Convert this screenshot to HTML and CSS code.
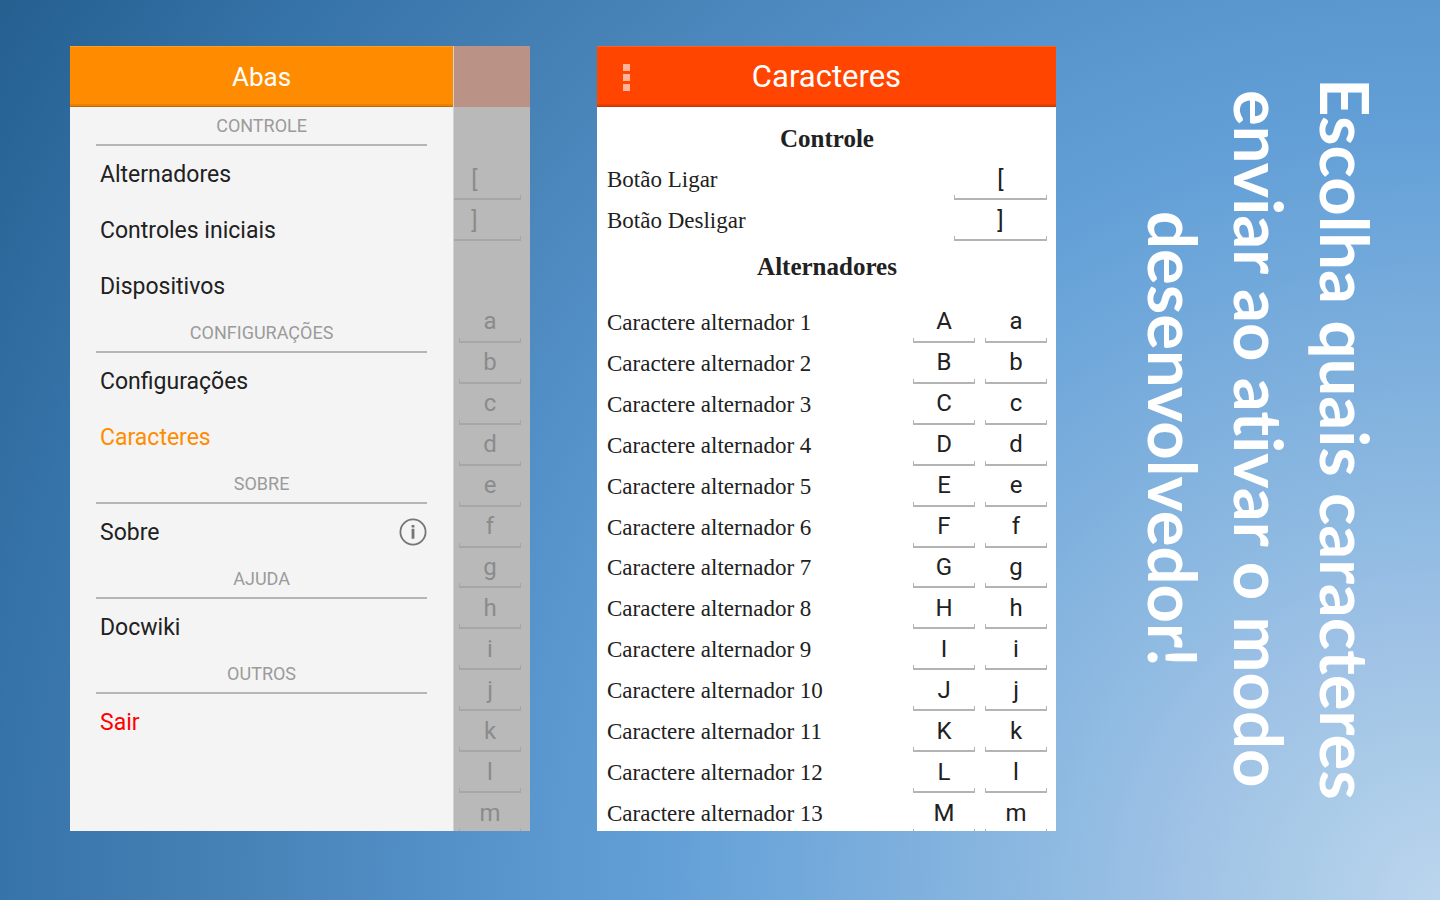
FILE: index.html
```html
<!DOCTYPE html>
<html lang="pt-BR">
<head>
<meta charset="utf-8">
<title>Caracteres</title>
<link rel="stylesheet" href="styles.css">
</head>
<body>
<main class="stage">
  <section class="phone phone-menu">
    <div class="drawer">
      <header class="bar bar-orange"><h2 class="bar-title bar-title-small">Abas</h2></header>
      <nav class="menu">
        <h3 class="menu-head">CONTROLE</h3>
        <a class="menu-item" href="#">Alternadores</a>
        <a class="menu-item" href="#">Controles iniciais</a>
        <a class="menu-item" href="#">Dispositivos</a>
        <h3 class="menu-head">CONFIGURAÇÕES</h3>
        <a class="menu-item" href="#">Configurações</a>
        <a class="menu-item current" href="#">Caracteres</a>
        <h3 class="menu-head">SOBRE</h3>
        <a class="menu-item" href="#">Sobre
          <svg class="info" viewBox="0 0 28 28" aria-hidden="true"><circle cx="14" cy="14" r="12.6" fill="none" stroke="#757575" stroke-width="1.8"/><path d="M12.6 7h2.8v2.4h-2.8zM12.6 10.8h2.8v10h-2.8z" fill="#757575"/></svg>
        </a>
        <h3 class="menu-head">AJUDA</h3>
        <a class="menu-item" href="#">Docwiki</a>
        <h3 class="menu-head">OUTROS</h3>
        <a class="menu-item danger" href="#">Sair</a>
      </nav>
    </div>
    <div class="behind">
      <div class="behind-bar"></div>
      <div class="behind-list">
        <div class="row"><input class="field wide" value="[" disabled aria-label="Botão Ligar"></div>
        <div class="row"><input class="field wide" value="]" disabled aria-label="Botão Desligar"></div>
        <div class="group-tall"></div>
        <div class="rows" id="behind"></div>
      </div>
    </div>
  </section>

  <section class="phone phone-page">
    <header class="bar bar-red">
      <button class="more" type="button" aria-label="Menu"><span class="dot"></span><span class="dot"></span><span class="dot"></span></button>
      <h1 class="bar-title">Caracteres</h1>
    </header>
    <form class="form">
      <h2 class="group">Controle</h2>
      <div class="row"><label class="label" for="on">Botão Ligar</label><input class="field wide" id="on" value="["></div>
      <div class="row"><label class="label" for="off">Botão Desligar</label><input class="field wide" id="off" value="]"></div>
      <h2 class="group group-tall">Alternadores</h2>
      <div class="rows" id="rows"></div>
    </form>
  </section>

  <p class="slogan">Escolha quais caracteres<br>enviar ao ativar o modo<br>desenvolvedor!</p>
</main>
<script src="rows.js"></script>
</body>
</html>
```
FILE: rows.js
```js
const letters = "abcdefghijklm".split("");
const field = (value, id, label) =>
  `<input class="field" id="${id}" value="${value}" aria-label="${label}">`;

document.getElementById("rows").innerHTML = letters.map((c, i) => {
  const name = `Caractere alternador ${i + 1}`;
  return `<div class="row"><label class="label" for="u${i}">${name}</label>` +
    field(c.toUpperCase(), `u${i}`, name) + field(c, `l${i}`, name) + `</div>`;
}).join("");

document.getElementById("behind").innerHTML = letters.map((c, i) =>
  `<div class="row"><input class="field" value="${c}" disabled aria-label="Caractere alternador ${i + 1}"></div>`).join("");
```
FILE: styles.css
```css
* { box-sizing: border-box; }

body {
  margin: 0;
  font-family: Roboto, "Liberation Sans", sans-serif;
  color: #212121;
  background: radial-gradient(circle farthest-corner at 100% 100%,
    #bcd5ee 0%, #abcce8 8%, #9cc0e5 17%, #90bbe2 22%, #7dafdd 32%, #6da6da 40%,
    #629fd6 46%, #5c99d0 52%, #528fc6 60%, #4782b6 71%, #3673a8 85%, #255f90 100%);
}

.stage {
  display: grid;
  grid-template-columns: 460fr 459fr 317fr;
  column-gap: 67px;
  min-height: 100vh;
  padding: 46px 0 69px 70px;
}

.phone {
  display: flex;
  height: calc(100vh - 115px);
  overflow: hidden;
}

.phone-page {
  flex-direction: column;
  background: #fff;
}

.bar {
  display: grid;
  grid-template-columns: 59px 1fr 59px;
  align-items: center;
  flex: none;
  height: 61px;
}

.bar-orange {
  background: #ff8c00;
  box-shadow: inset 0 1px #ff9e27, inset 0 -1px #c06a04, inset 0 -3px #e98102;
}

.bar-red {
  background: #ff4500;
  box-shadow: inset 0 1px #ff6022, inset 0 -1px #c03603, inset 0 -3px #e94002;
}

.bar-title {
  grid-column: 2;
  margin: 0;
  font-size: 31px;
  font-weight: 400;
  line-height: 36px;
  text-align: center;
  color: #fff;
}

.bar-title-small { font-size: 26px; }

.more {
  display: flex;
  flex-direction: column;
  align-items: center;
  gap: 3px;
  padding: 2px 0 0;
  border: 0;
  background: none;
}

.dot {
  width: 7px;
  height: 7px;
  background: #ffb499;
}

.drawer {
  flex: 384 1 0;
  background: #f4f4f4;
  border-right: 1px solid #d2d2d2;
}

.menu { padding: 0 26px; }

.menu-head {
  height: 39px;
  margin: 0;
  border-bottom: 2px solid #b5b5b5;
  font-size: 18px;
  font-weight: 400;
  line-height: 37px;
  text-align: center;
  color: #9b9b9b;
}

.menu-item {
  display: flex;
  align-items: center;
  justify-content: space-between;
  height: 56px;
  padding-left: 4px;
  font-size: 23px;
  color: #212121;
  text-decoration: none;
}

.current { color: #ff8c00; }
.danger { color: #f00; }

.info {
  width: 28px;
  height: 28px;
}

.behind {
  display: flex;
  flex-direction: column;
  flex: 76 1 0;
  min-width: 0;
  overflow: hidden;
  background: #b9b9b9;
}

.behind-bar {
  flex: none;
  height: 61px;
  background: #ba9386;
}

.behind-list {
  display: flex;
  flex-direction: column;
  flex: 1;
  padding: 52px 9px 0 0;
}

.behind .row { justify-content: flex-end; }

.behind .field {
  --line: #a6a6a6;
  color: #8b8b8b;
}

.form {
  display: flex;
  flex-direction: column;
  flex: 1;
  padding: 11px 9px 0 10px;
}

.group {
  flex: none;
  height: 41px;
  margin: 0;
  font-family: "Liberation Serif", serif;
  font-size: 25px;
  font-weight: 700;
  line-height: 42px;
  text-align: center;
}

.group-tall {
  flex: none;
  height: 61px;
}

.group.group-tall { line-height: 52px; }

.rows {
  display: grid;
  grid-auto-rows: 1fr;
  flex: 1;
  margin-bottom: -3px;
}

.row {
  display: flex;
  gap: 10px;
  min-height: 40px;
}

.form > .row,
.behind-list > .row {
  flex: none;
  height: 41px;
}

.label {
  flex: 1;
  align-self: center;
  padding-top: 1px;
  font-family: "Liberation Serif", serif;
  font-size: 23px;
  line-height: 36px;
}

.field {
  --line: #b4b4b4;
  flex: none;
  width: 62px;
  padding: 0 0 2px;
  border: 0;
  font: 24px Roboto, "Liberation Sans", sans-serif;
  text-align: center;
  color: #212121;
  background:
    linear-gradient(var(--line), var(--line)) 0 100% / 100% 2px no-repeat,
    linear-gradient(var(--line), var(--line)) 0 100% / 1px 5px no-repeat,
    linear-gradient(var(--line), var(--line)) 100% 100% / 1px 5px no-repeat;
}

.wide { width: 93px; }

.slogan {
  margin: 0;
  padding-right: 51px;
  writing-mode: vertical-rl;
  font-family: Lato, "Open Sans", sans-serif;
  font-size: 67px;
  font-weight: 700;
  font-variant-ligatures: none;
  line-height: 86px;
  text-align: center;
  color: #fff;
}
```
